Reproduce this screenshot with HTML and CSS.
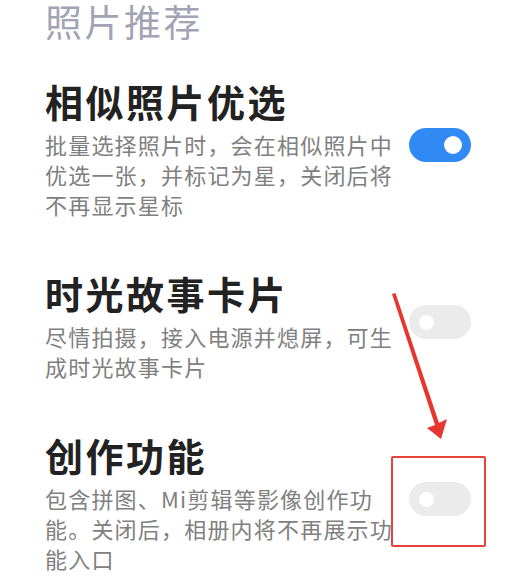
FILE: index.html
```html
<!DOCTYPE html>
<html lang="zh-CN">
<head>
    <meta charset="UTF-8">
    <meta name="viewport" content="width=device-width, initial-scale=1.0">
    <title>照片推荐</title>
    <link rel="stylesheet" href="styles.css">
</head>
<body>

<div class="page">
    <h2 class="group-title">照片推荐</h2>

    <div class="setting">
        <div class="setting-text">
            <div class="setting-name">相似照片优选</div>
            <div class="setting-desc">批量选择照片时，会在相似照片中优选一张，并标记为星，关闭后将不再显示星标</div>
        </div>
        <div class="switch on"><span class="knob"></span></div>
    </div>

    <div class="setting">
        <div class="setting-text">
            <div class="setting-name">时光故事卡片</div>
            <div class="setting-desc">尽情拍摄，接入电源并熄屏，可生成时光故事卡片</div>
        </div>
        <div class="switch"><span class="knob"></span></div>
    </div>

    <div class="setting">
        <div class="setting-text">
            <div class="setting-name">创作功能</div>
            <div class="setting-desc">包含拼图、Mi剪辑等影像创作功能。关闭后，相册内将不再展示功能入口</div>
        </div>
        <div class="switch"><span class="knob"></span></div>
    </div>
</div>

<!-- red markup drawn on top of the screen -->
<svg class="mark-arrow" width="518" height="580" viewBox="0 0 518 580">
    <path d="M392 294 L395.5 293 L439 423 L447 419 L441 439 L427 428 L435 425 Z" fill="#e8352e"/>
</svg>
<div class="mark-box"></div>

</body>
</html>
```

FILE: styles.css
```css
body {
    margin: 0;
    background-color: #ffffff;
    font-family: "Noto Sans CJK SC", "Noto Sans", sans-serif;
}
.page {
    padding: 0 47px 0 45px;
}
.group-title {
    margin: 0 0 35px 0;
    font-size: 37px;
    line-height: 42px;
    font-weight: normal;
    letter-spacing: 2.5px;
    color: #a2a4b4;
}
.setting {
    display: flex;
    align-items: center;
    justify-content: space-between;
    margin-bottom: 50px;
}
.setting:last-child {
    margin-bottom: 0;
}
.setting-text {
    width: 352px;
}
.setting-name {
    font-size: 38px;
    line-height: 48px;
    font-weight: bold;
    letter-spacing: 2.5px;
    color: #222222;
}
.setting-desc {
    margin-top: 4px;
    font-size: 22px;
    line-height: 30px;
    letter-spacing: 1.2px;
    color: #808080;
}
.switch {
    position: relative;
    width: 62px;
    height: 34px;
    margin-top: -6px;
    border-radius: 17px;
    background-color: #ebebeb;
    flex-shrink: 0;
}
.switch .knob {
    position: absolute;
    top: 10px;
    left: 10px;
    width: 15px;
    height: 15px;
    border-radius: 50%;
    background-color: #ffffff;
}
.switch.on {
    background-color: #3189f4;
}
.switch.on .knob {
    top: 8px;
    left: auto;
    right: 9px;
    width: 18px;
    height: 18px;
}
.mark-arrow {
    position: absolute;
    top: 0;
    left: 0;
}
.mark-box {
    position: absolute;
    top: 456px;
    left: 391px;
    width: 91px;
    height: 87px;
    border: 2.5px solid #e8403a;
    border-radius: 2px;
}
```
